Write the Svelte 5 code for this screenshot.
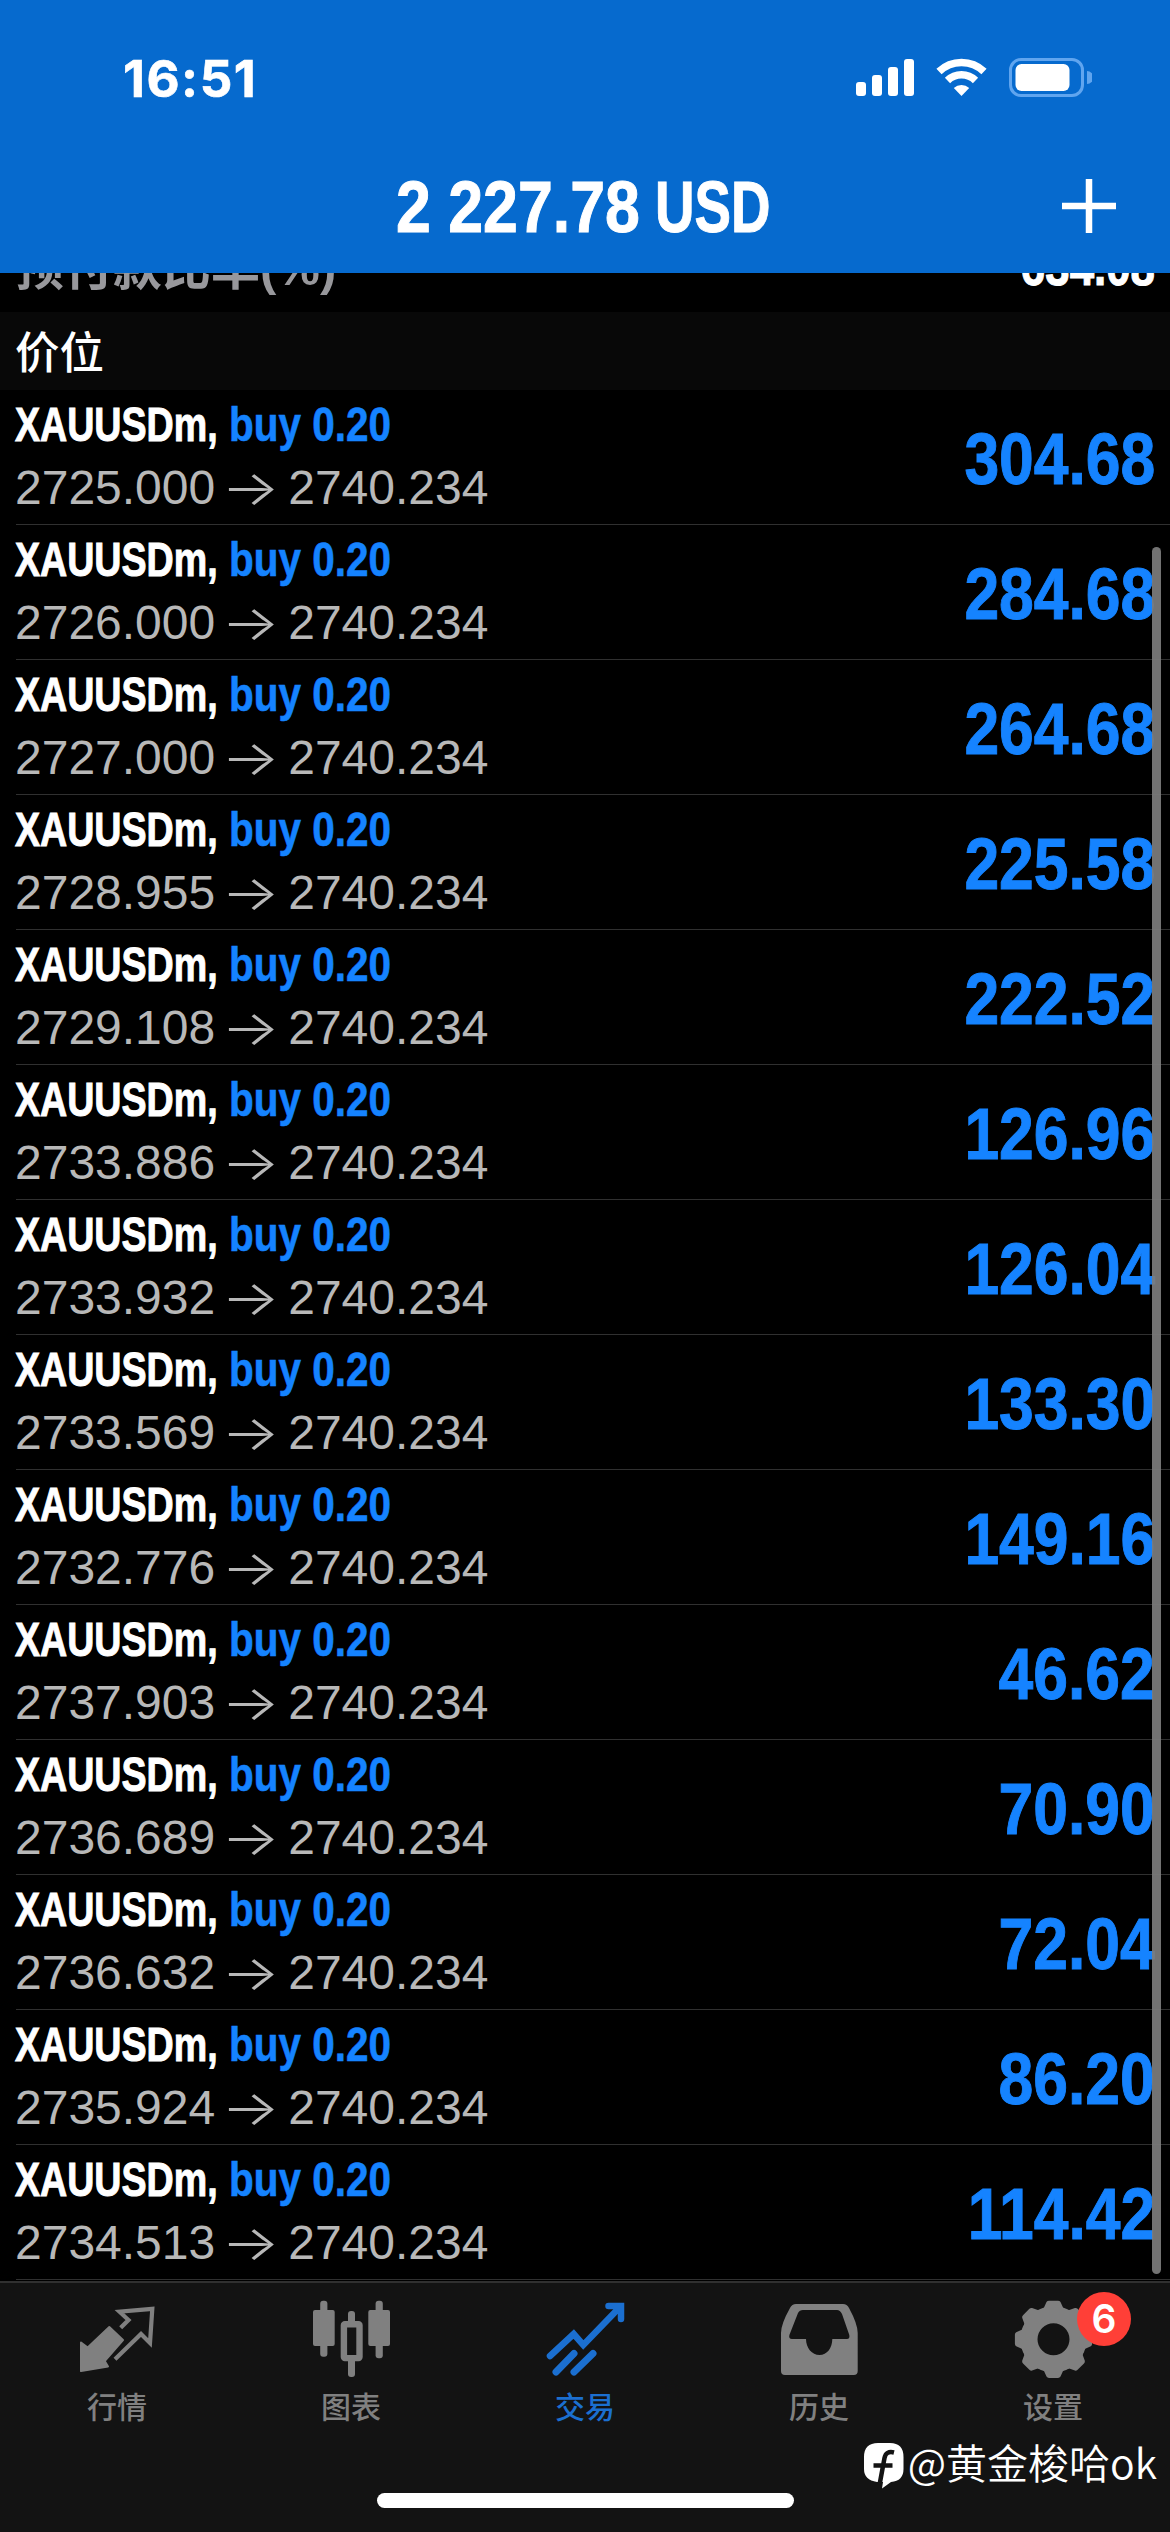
<script lang="ts">
  interface Position {
    symbol: string;
    volume: string;
    open: string;
    current: string;
    profit: string;
  }

  const current = "2740.234";

  const positions: Position[] = [
    ["2725.000", "304.68"],
    ["2726.000", "284.68"],
    ["2727.000", "264.68"],
    ["2728.955", "225.58"],
    ["2729.108", "222.52"],
    ["2733.886", "126.96"],
    ["2733.932", "126.04"],
    ["2733.569", "133.30"],
    ["2732.776", "149.16"],
    ["2737.903", "46.62"],
    ["2736.689", "70.90"],
    ["2736.632", "72.04"],
    ["2735.924", "86.20"],
    ["2734.513", "114.42"],
  ].map(([open, profit]) => ({ symbol: "XAUUSDm", volume: "0.20", open, current, profit }));

  const tabs = [
    { id: "quotes", label: "行情" },
    { id: "charts", label: "图表" },
    { id: "trade", label: "交易" },
    { id: "history", label: "历史" },
    { id: "settings", label: "设置", badge: 6 },
  ];

  let active = $state("trade");
</script>

<div class="screen">
  <header>
    <div class="status">
      <span class="time">16:51</span>
      <svg class="status-icons" width="236" height="40" viewBox="0 0 236 40">
        <g fill="#fff">
          <rect x="0" y="24" width="10" height="14" rx="3" />
          <rect x="16" y="17" width="10" height="21" rx="3" />
          <rect x="32" y="9" width="10" height="29" rx="3" />
          <rect x="48" y="1" width="10" height="37" rx="3" />
          <path d="M105.500 38 L97.800 30 A11.500 11.500 0 0 1 113.200 30 Z" />
        </g>
        <g fill="none" stroke="#fff" stroke-width="7.500">
          <path d="M83 13.500 A32.500 32.500 0 0 1 128 13.500" />
          <path d="M91.500 22.500 A20 20 0 0 1 119.500 22.500" />
        </g>
        <rect x="154.500" y="1.500" width="72" height="36" rx="10.500" fill="none" stroke="#60a5ef" stroke-width="3" />
        <rect x="159.500" y="6" width="54" height="27" rx="6" fill="#fff" />
        <path d="M231 13 A6.500 6.500 0 0 1 231 26 Z" fill="#60a5ef" />
      </svg>
    </div>
    <div class="title-bar">
      <h1><span class="amount">2 227.78</span> <span class="currency">USD</span></h1>
      <svg class="add" width="54" height="54" viewBox="0 0 54 54">
        <path d="M27 0 V54 M0 27 H54" stroke="#fff" stroke-width="6.500" />
      </svg>
    </div>
  </header>

  <main>
    <div class="summary">
      <span class="summary-label">预付款比率(%)</span>
      <span class="summary-value">634.08</span>
    </div>
    <h2>价位</h2>
    <ul>
      {#each positions as p}
        <li>
          <div class="info">
            <div class="deal">
              <span class="symbol">{p.symbol},</span>
              <span class="side">buy {p.volume}</span>
            </div>
            <div class="prices">
              <span>{p.open}</span>
              <span class="arrow">→</span>
              <span>{p.current}</span>
            </div>
          </div>
          <span class="profit">{p.profit}</span>
        </li>
      {/each}
    </ul>
    <div class="scrollbar"></div>
  </main>

  <nav>
    {#each tabs as tab}
      <button class:active={active === tab.id} onclick={() => (active = tab.id)}>
        <svg width="90" height="90" viewBox="0 0 90 90" fill="currentColor">
          {#if tab.id === "quotes"}
            <path
              d="M9 46.500 L15.700 51.500 L37.300 31 L51 44 L32.700 65 L36 70.500 L9 75 Z"
              stroke="currentColor"
              stroke-width="2"
              stroke-linejoin="round"
            />
            <path
              d="M48.700 31.700 L56.500 24 L47.500 15.700 L80.300 12.900 L78 47 L69 38 L43 63.300"
              fill="none"
              stroke="currentColor"
              stroke-width="4.200"
            />
          {:else if tab.id === "charts"}
            <rect x="7" y="14" width="21.700" height="36" rx="2" />
            <rect x="14.200" y="4.700" width="7.200" height="56" rx="3" />
            <rect x="62.300" y="14" width="21.700" height="36" rx="2" />
            <rect x="69.600" y="4.700" width="7.200" height="57.600" rx="3" />
            <rect x="42" y="15" width="7" height="14" rx="3" />
            <rect x="42" y="62" width="7" height="19" rx="3" />
            <rect x="37.900" y="28.300" width="15.600" height="33.800" rx="1" fill="none" stroke="currentColor" stroke-width="6.400" />
          {:else if tab.id === "trade"}
            <path
              d="M10 60 L33.700 38 L43.300 49 L79 12 M68.500 10 H81 V23"
              fill="none"
              stroke="currentColor"
              stroke-width="6.500"
              stroke-linecap="round"
            />
            <path
              d="M16 76 L34 57.500 M34 76 L53 57.500"
              fill="none"
              stroke="currentColor"
              stroke-width="7"
              stroke-linecap="round"
            />
            <path d="M69 7 H84 V22 Z" />
          {:else if tab.id === "history"}
            <path
              fill-rule="evenodd"
              d="M22 8 H69 Q73 8 75 12 Q83.700 28 83.700 37 V75 Q83.700 79 79.700 79 H11 Q7 79 7 75 V37 Q7 28 16 12 Q18 8 22 8 Z
                M29 14 Q25.500 14 24 17 L15.400 39 Q14.500 43 18 43 H32 C32 52 38 59 45.500 59 C53 59 58.300 52 58.300 43 H73 Q76 43 75.300 39 L68 18 Q66 14 63 14 Z"
            />
          {:else}
            <circle cx="45.500" cy="43.300" r="24.500" fill="none" stroke="currentColor" stroke-width="17" />
            {#each [0, 45, 90, 135, 180, 225, 270, 315] as angle}
              <path
                d="M33 13.500 L36 11.500 L38.500 6 Q39.300 4.700 41 4.700 H50 Q51.700 4.700 52.500 6 L55 11.500 L58 13.500 L52 20 H39 Z"
                transform="rotate({angle} 45.5 43.3)"
              />
            {/each}
          {/if}
        </svg>
        <span class="label">{tab.label}</span>
        {#if tab.badge}
          <span class="badge">{tab.badge}</span>
        {/if}
      </button>
    {/each}
    <div class="home-indicator"></div>
    <div class="watermark">
      <svg width="40" height="46" viewBox="0 0 40 46">
        <path
          fill="#fff"
          d="M14 0 H26 Q39.500 0 39.500 14 V26 Q39.500 38 27 39 L18 45.500 L19 39 H13 Q0 37 0 26 V14 Q0 0 14 0 Z"
        />
        <path
          fill="none"
          stroke="#131313"
          stroke-width="4.500"
          d="M30 9.500 Q22 7.500 20.500 15 L15.500 42 M9.500 22.500 H28.500"
        />
      </svg>
      <span>@黄金梭哈ok</span>
    </div>
  </nav>
</div>

<style>
  :global(body) {
    background: #000;
  }
  .screen {
    display: flex;
    flex-direction: column;
    width: 1170px;
    height: 2532px;
    overflow: hidden;
    background: #000;
    color: #fff;
    font-family: "Liberation Sans", "Noto Sans CJK SC", sans-serif;
  }
  header {
    flex: none;
    height: 273px;
    background: #066ace;
  }
  .status {
    display: flex;
    align-items: center;
    justify-content: space-between;
    height: 156px;
    padding: 0 78px 0 123px;
  }
  .time {
    font: 700 51px/1 Inter, sans-serif;
    letter-spacing: 1.5px;
    -webkit-text-stroke: 0.6px #fff;
  }
  .title-bar {
    display: grid;
    grid-template-columns: 54px 1fr 54px;
    align-items: center;
    height: 100px;
    padding: 0 54px;
  }
  h1 {
    grid-column: 2;
    display: flex;
    margin: 0 0 0 288px;
    padding-top: 2px;
    font-size: 72px;
    font-weight: 700;
    line-height: 98px;
    -webkit-text-stroke: 1px #fff;
  }
  .amount {
    width: 259px;
    white-space: nowrap;
    transform: scaleX(0.87);
    transform-origin: left;
  }
  .currency {
    transform: scaleX(0.76);
    transform-origin: left;
  }
  main {
    position: relative;
    flex: none;
    height: 2008px;
    overflow: hidden;
  }
  .summary {
    display: flex;
    justify-content: space-between;
    align-items: flex-end;
    height: 30px;
    padding: 0 15px 9px;
    font-weight: 700;
    overflow: hidden;
  }
  .summary-label {
    color: #98989c;
    font-size: 49px;
    line-height: 70px;
  }
  .summary-value {
    font-size: 51px;
    line-height: 70px;
    transform: scaleX(0.86);
    transform-origin: right;
    -webkit-text-stroke: 1px #fff;
  }
  h2 {
    margin: 0;
    height: 78px;
    padding-left: 15px;
    background: #080808;
    font: 500 44.5px/75px "Noto Sans CJK SC", sans-serif;
  }
  ul {
    margin: 0;
    padding: 0;
    list-style: none;
  }
  li {
    display: flex;
    justify-content: space-between;
    align-items: center;
    height: 134px;
    margin-left: 16px;
    padding-right: 15px;
    border-bottom: 1px solid #303030;
  }
  .info {
    margin-left: -1px;
  }
  .deal {
    display: grid;
    grid-template-columns: 214px auto;
    padding-bottom: 2px;
    font-size: 48.5px;
    font-weight: 700;
    line-height: 60px;
  }
  .symbol {
    transform: scaleX(0.775);
    transform-origin: left;
    -webkit-text-stroke: 1px #fff;
  }
  .side {
    white-space: nowrap;
    transform: scaleX(0.835);
    transform-origin: left;
    -webkit-text-stroke: 0.6px #1583ff;
  }
  .side,
  .profit {
    color: #1583ff;
  }
  .prices {
    display: flex;
    align-items: center;
    color: #b8b8b8;
    font-size: 48px;
    line-height: 64px;
  }
  .arrow {
    width: 73px;
    text-align: center;
    font-family: Inter, sans-serif;
    font-weight: 300;
    transform: translateX(-1px) scaleX(1.28);
  }
  .profit {
    padding-top: 3px;
    font-size: 73px;
    font-weight: 700;
    line-height: 1;
    transform: scaleX(0.855);
    transform-origin: right;
    -webkit-text-stroke: 1px #1583ff;
  }
  .scrollbar {
    position: absolute;
    top: 274px;
    right: 9px;
    width: 9px;
    height: 1727px;
    border-radius: 5px;
    background: rgba(125, 125, 125, 0.92);
  }
  nav {
    position: relative;
    flex: 1;
    display: grid;
    grid-template-columns: repeat(5, 1fr);
    align-items: start;
    border-top: 2px solid #303030;
    background: #131313;
  }
  button {
    position: relative;
    display: flex;
    flex-direction: column;
    align-items: center;
    padding: 13px 0 0;
    border: none;
    background: none;
    color: #808080;
  }
  button.active {
    color: #1b6fd0;
  }
  .label {
    margin-top: -1px;
    font: 500 30px/40px "Noto Sans CJK SC", sans-serif;
  }
  .badge {
    position: absolute;
    top: 9px;
    left: 141px;
    width: 54px;
    height: 54px;
    border-radius: 50%;
    background: #ff3f37;
    color: #fff;
    font: 600 39px/54px Inter, sans-serif;
    text-align: center;
  }
  .home-indicator {
    position: absolute;
    bottom: 24px;
    left: 377px;
    width: 417px;
    height: 15px;
    border-radius: 8px;
    background: #fff;
  }
  .watermark {
    position: absolute;
    right: 13px;
    bottom: 43px;
    display: flex;
    align-items: center;
    gap: 4px;
    font: 350 41px/56px "Noto Sans CJK SC", sans-serif;
  }
  .watermark svg {
    margin-top: 9px;
  }
</style>
